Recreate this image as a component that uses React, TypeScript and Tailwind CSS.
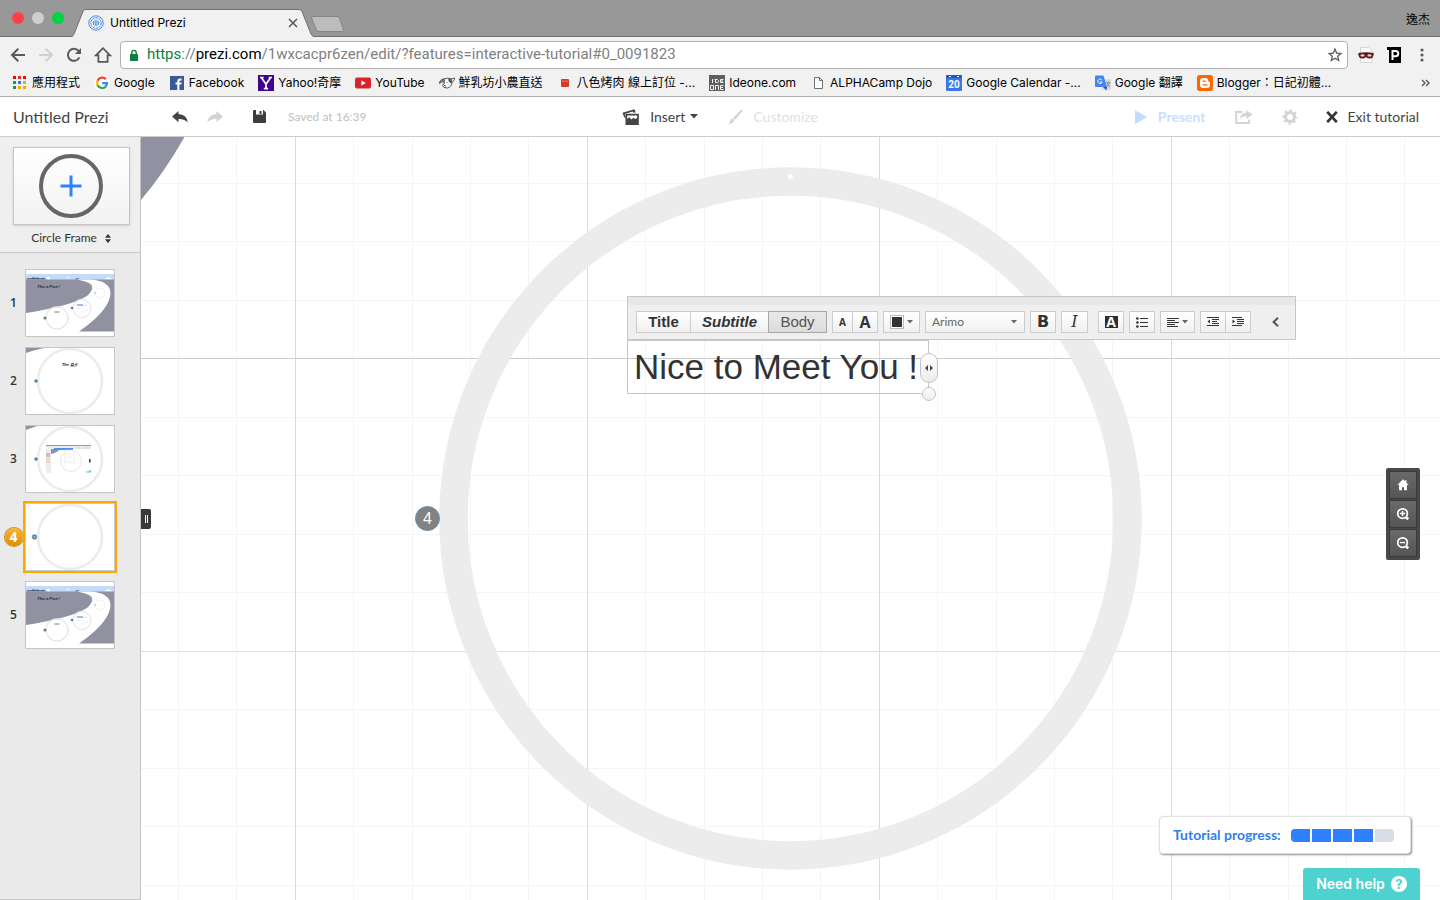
import type { ReactNode } from "react";

const MINOR_X = 58.4;
const MINOR_Y = 58.5;
const slate = "#9092a1";

/* ---------- browser icons ---------- */

function PreziLogo() {
  return (
    <svg viewBox="0 0 16 16" className="size-4 shrink-0" fill="none" stroke="#3d8bf0">
      <circle cx="8" cy="8" r="7.2" strokeWidth="1" />
      <circle cx="8" cy="8" r="5.2" strokeWidth="1" strokeDasharray="2.4 0.6" />
      <path d="M5.5 6.2v3.6M7.2 5v6M8.9 5v6M10.6 6.2v3.6" strokeWidth="1" />
    </svg>
  );
}

function BackIcon({ flip = false, color }: { flip?: boolean; color: string }) {
  return (
    <svg viewBox="0 0 16 16" className={flip ? "size-4 rotate-180" : "size-4"} fill="none" stroke={color} strokeWidth="2">
      <path d="M15 8H2.5M8.3 1.8 2 8l6.3 6.2" />
    </svg>
  );
}

function ReloadIcon() {
  return (
    <svg viewBox="0 0 16 16" className="size-4" fill="none" stroke="#5a5a5a" strokeWidth="2">
      <path d="M13.4 10.4A6 6 0 1 1 12.6 4" />
      <path d="M15 1v6H9z" fill="#5a5a5a" stroke="none" />
    </svg>
  );
}

function HomeOutlineIcon() {
  return (
    <svg viewBox="0 0 18 18" className="size-[18px]" fill="none" stroke="#5a5a5a" strokeWidth="1.8">
      <path d="M9 2.2 2 9.3h2.4v6.5h9.2V9.3H16z" />
    </svg>
  );
}

function LockIcon() {
  return (
    <svg viewBox="0 0 10 13" className="h-[13px] w-[10px] shrink-0">
      <rect x="1" y="5" width="8" height="7" rx="0.6" fill="#0b8043" />
      <path d="M2.8 5.4V3.6a2.2 2.2 0 0 1 4.4 0v1.8" fill="none" stroke="#0b8043" strokeWidth="1.4" />
    </svg>
  );
}

function StarIcon() {
  return (
    <svg viewBox="0 0 16 16" className="size-4" fill="none" stroke="#5a5a5a" strokeWidth="1.3">
      <path d="m8 2.200 1.700 3.900 4.200.4-3.200 2.800 1 4.200L8 11.300l-3.700 2.200 1-4.200-3.200-2.800 4.200-.4z" />
    </svg>
  );
}

function MaskIcon() {
  return (
    <svg viewBox="0 0 16 16" className="size-4">
      <path d="M2.500 .5h8.500l3 3.500v11.500H2.500z" fill="#fafafa" stroke="#cfcfcf" strokeWidth="0.8" />
      <path d="M0.300 6Q8 4.600 15.700 6q.3 5.500-4.100 5.500-2 0-3.600-1.500-1.600 1.500-3.600 1.500Q0 11.500.3 6Z" fill="#5c1a1a" />
      <ellipse cx="4.500" cy="8.400" rx="2" ry="1.200" fill="#e9d5d5" />
      <ellipse cx="11.500" cy="8.400" rx="2" ry="1.200" fill="#e9d5d5" />
    </svg>
  );
}

function PBadgeIcon() {
  return (
    <svg viewBox="0 0 16 16" className="size-4">
      <path d="M1 0h14v16H3V3H1z" fill="#000" />
      <path d="M6.500 13V4h3.200a2.600 2.600 0 0 1 0 5.200H6.500" fill="none" stroke="#fff" strokeWidth="2" />
    </svg>
  );
}

function MenuDots() {
  return (
    <svg viewBox="0 0 4 16" className="h-4 w-1" fill="#5a5a5a">
      <circle cx="2" cy="3" r="1.600" />
      <circle cx="2" cy="8" r="1.600" />
      <circle cx="2" cy="13" r="1.600" />
    </svg>
  );
}

function AppsIcon() {
  const colors = ["#f00", "#f22", "#f00", "#0a9f4a", "#1a7cf0", "#f5a800", "#0a9f4a", "#f5a800", "#f5a800"];
  return (
    <svg viewBox="0 0 16 16" className="size-4 shrink-0">
      {colors.map((c, i) => (
        <rect key={i} x={1 + (i % 3) * 5} y={1 + Math.floor(i / 3) * 5} width="3" height="3" fill={c} />
      ))}
    </svg>
  );
}

function GoogleIcon() {
  return (
    <svg viewBox="0 0 16 16" className="size-4 shrink-0">
      <circle cx="8" cy="8" r="7.800" fill="#fff" />
      <g fill="none" strokeWidth="2.300">
        <path d="M11.900 4.200A5 5 0 0 0 3.600 5.700" stroke="#ea4335" />
        <path d="M3.600 5.700a5 5 0 0 0 0 4.700" stroke="#fbbc05" />
        <path d="M3.600 10.300a5 5 0 0 0 7.800 1.500" stroke="#34a853" />
        <path d="M11.400 11.800A5 5 0 0 0 13 8.100H8.200" stroke="#4285f4" />
      </g>
    </svg>
  );
}

function FacebookIcon() {
  return (
    <svg viewBox="0 0 16 16" className="size-4 shrink-0">
      <rect x="1" y="1" width="14" height="14" fill="#3b5998" />
      <path d="M8.300 15V9.600H6.500V7.500h1.800V6q0-2.600 2.700-2.600h1.600v2h-1.200q-1 0-1 1v1.100h2.200l-.3 2.100h-1.900V15z" fill="#fff" />
    </svg>
  );
}

function YahooIcon() {
  return (
    <svg viewBox="0 0 16 16" className="size-4 shrink-0">
      <rect width="16" height="16" fill="#400090" />
      <path d="M3.300 2.500 8 9.200l4.700-6.700M8 9v4.800M2 2.500h3.600M10.800 2.500H14M5.800 13.600h4.400" fill="none" stroke="#fff" strokeWidth="1.700" />
    </svg>
  );
}

function YouTubeIcon() {
  return (
    <svg viewBox="0 0 16 16" className="size-4 shrink-0">
      <rect x="0" y="2.500" width="16" height="11" rx="2" fill="#d9252a" />
      <path d="m6.400 5.400 4.500 2.600-4.500 2.600z" fill="#fff" />
    </svg>
  );
}

function CowIcon() {
  return (
    <svg viewBox="0 0 16 16" className="size-4 shrink-0" fill="none" stroke="#555" strokeWidth="1">
      <path d="M4.500 4Q9 2.500 12.500 3.800l3.200-.6q-.2 3-2.500 3.500-.7 5.600-4.700 6.300-4.500.2-5.200-2.800 2.700-1 2-3.400Z" fill="#fafafa" />
      <path d="M.5 8.500Q.5 4.500 5 4l.5 2.800Q2 6.500.5 8.500Z" fill="#888" />
      <path d="M9.800 4.300q2-.8 2.700.2l-.3 3.500Q9.500 7 9.800 4.300Z" fill="#555" />
      <path d="M8 7.300l.8 1M4.800 10.500l2.200.5" />
    </svg>
  );
}

function RedBoxIcon() {
  return (
    <svg viewBox="0 0 16 16" className="size-4 shrink-0">
      <rect x="4" y="4" width="8" height="8" rx="1" fill="#d83a27" />
      <path d="M5.500 6.200h5" stroke="#f3b5a8" strokeDasharray="1 1" />
    </svg>
  );
}

function IdeoneIcon() {
  return (
    <svg viewBox="0 0 16 16" className="size-4 shrink-0">
      <rect width="16" height="16" fill="#5f5f5f" />
      <g fill="none" stroke="#f2f2f2" strokeWidth="1">
        <path d="M3.500 4v4M5.500 4.500h3l1 1v1.500l-1 .5h-2V4.500M14.500 4.500h-3v3h3M11.500 6h2.500" />
        <path d="M1.500 10.500h3v4h-3zM6.500 15v-4.500h3V15M14.500 10.500h-3v4h3M11.500 12.500h2.500" />
      </g>
    </svg>
  );
}

function DocIcon() {
  return (
    <svg viewBox="0 0 16 16" className="size-4 shrink-0" fill="#fff" stroke="#707070">
      <path d="M4.500 2.500h5l3 3v8h-8z" />
      <path d="M9.500 2.500v3h3" fill="none" />
    </svg>
  );
}

function CalendarIcon() {
  return (
    <svg viewBox="0 0 16 16" className="size-4 shrink-0">
      <rect width="16" height="16" rx="1.500" fill="#3a78e7" />
      <rect width="16" height="3" rx="1" fill="#2a56c6" />
      <path d="M3 1.500h2M11 1.500h2" stroke="#fff" strokeWidth="1" />
      <text x="8" y="13" textAnchor="middle" fill="#fff" fontSize="10" fontWeight="700" fontFamily="Roboto, sans-serif">20</text>
    </svg>
  );
}

function TranslateIcon() {
  return (
    <svg viewBox="0 0 16 16" className="size-4 shrink-0">
      <rect x="7" y="4" width="9" height="11" rx="1" fill="#dcdcdc" />
      <path d="M0 1.500A1 1 0 0 1 1 .5h7.500L12 12H1a1 1 0 0 1-1-1z" fill="#4285f4" />
      <path d="m8 12 3.500 3.500L12 12z" fill="#2a56c6" />
      <path d="M7 5.200A2.200 2.200 0 1 0 7.200 7H5" fill="none" stroke="#fff" strokeWidth="1" />
      <path d="M11.500 7.500h3.500M13.200 6.500v1M12 8q1 3 3 4M14.500 8q-.5 2.500-3 4" fill="none" stroke="#777" strokeWidth="0.800" />
    </svg>
  );
}

function BloggerIcon() {
  return (
    <svg viewBox="0 0 16 16" className="size-4 shrink-0">
      <rect width="16" height="16" rx="2.500" fill="#f60" />
      <path d="M6 3h2.500A2.700 2.700 0 0 1 11.200 5.700q0 1 .8 1.100 1 .1 1 1V10a3 3 0 0 1-3 3H6a3 3 0 0 1-3-3V6a3 3 0 0 1 3-3z" fill="#fff" />
      <path d="M6 6.200h2.500M6 9.800h4" stroke="#f60" strokeWidth="1.300" strokeLinecap="round" />
    </svg>
  );
}

const bookmarks: { label: string; icon: ReactNode }[] = [
  { label: "應用程式", icon: <AppsIcon /> },
  { label: "Google", icon: <GoogleIcon /> },
  { label: "Facebook", icon: <FacebookIcon /> },
  { label: "Yahoo!奇摩", icon: <YahooIcon /> },
  { label: "YouTube", icon: <YouTubeIcon /> },
  { label: "鮮乳坊小農直送", icon: <CowIcon /> },
  { label: "八色烤肉 線上訂位 -...", icon: <RedBoxIcon /> },
  { label: "Ideone.com", icon: <IdeoneIcon /> },
  { label: "ALPHACamp Dojo", icon: <DocIcon /> },
  { label: "Google Calendar -...", icon: <CalendarIcon /> },
  { label: "Google 翻譯", icon: <TranslateIcon /> },
  { label: "Blogger：日記初體...", icon: <BloggerIcon /> },
];

function BrowserChrome() {
  return (
    <div className="shrink-0 border-b border-[#adadad] bg-[#f1f1f1] font-[Inter,'Noto_Sans_CJK_TC',sans-serif] text-xs text-black">
      <div className="flex h-[37px] items-end border-b border-[#707070] bg-[#989898]">
        <div className="flex h-full w-[72px] shrink-0 items-center gap-2 pl-3">
          <button aria-label="Close window" className="size-3 rounded-full bg-[#fc4146]" />
          <button aria-label="Minimize window" className="size-3 rounded-full bg-[#cfcfcf]" />
          <button aria-label="Zoom window" className="size-3 rounded-full bg-[#00d344]" />
        </div>
        <div className="relative -mb-px flex h-7 w-[242px] items-center gap-[6px] pr-4 pl-4">
          <svg viewBox="0 0 242 28" preserveAspectRatio="none" className="absolute inset-0 size-full">
            <path d="M0 28Q1 27 2 25L11 2.500Q12 .5 14 .5H227Q229 .5 230 2.500L239 25Q240 27 242 28Z" fill="#f1f1f1" />
            <path d="M0 27.500Q1 27 2 25L11 2.500Q12 .5 14 .5H227Q229 .5 230 2.500L239 25Q240 27 242 27.500" fill="none" stroke="#707070" />
          </svg>
          <span className="relative flex"><PreziLogo /></span>
          <span className="relative grow">Untitled Prezi</span>
          <button aria-label="Close tab" className="relative">
            <svg viewBox="0 0 10 10" className="size-[10px]" stroke="#555" strokeWidth="1.500"><path d="m1 1 8 8M9 1 1 9" /></svg>
          </button>
        </div>
        <button aria-label="New tab" className="mb-1 -ml-1">
          <svg viewBox="0 0 34 16" className="h-4 w-[34px]">
            <path d="M3 .5h24q2 0 2.500 1.500l4 12q.5 1.500-1.500 1.500H9q-2 0-2.500-1.500L1.500 2Q1 .5 3 .5Z" fill="#bcbcbc" stroke="#858585" />
          </svg>
        </button>
        <span className="ml-auto flex h-full items-center pt-1 pr-[10px]">逸杰</span>
      </div>

      <div className="flex h-9 items-center pr-4 pl-[10px]">
        <div className="flex w-[110px] shrink-0 items-center gap-3">
          <button aria-label="Back"><BackIcon color="#5a5a5a" /></button>
          <button aria-label="Forward"><BackIcon flip color="#d0d0d0" /></button>
          <button aria-label="Reload"><ReloadIcon /></button>
          <button aria-label="Home"><HomeOutlineIcon /></button>
        </div>
        <div className="flex h-7 min-w-0 grow items-center rounded border border-[#b0b0b0] bg-white px-2 font-[Roboto,sans-serif] text-[15px]">
          <LockIcon />
          <span className="ml-2 grow truncate text-[#808080]">
            <span className="text-[#0b8043]">https</span>://<span className="text-black">prezi.com</span>/1wxcacpr6zen/edit/?features=interactive-tutorial#0_0091823
          </span>
          <button aria-label="Bookmark" className="-mr-1"><StarIcon /></button>
        </div>
        <div className="ml-[10px] flex shrink-0 items-center gap-3">
          <button aria-label="Incognito filter"><MaskIcon /></button>
          <button aria-label="Pocket"><PBadgeIcon /></button>
          <button aria-label="Menu" className="pl-[6px]"><MenuDots /></button>
        </div>
      </div>

      <nav className="flex h-[23px] items-start gap-[14px] pr-[10px] pl-3">
        {bookmarks.map((b) => (
          <a key={b.label} href="#bookmark" className="flex h-5 shrink-0 items-center gap-1 whitespace-nowrap">
            {b.icon}
            <span>{b.label}</span>
          </a>
        ))}
        <button aria-label="More bookmarks" className="ml-auto flex h-5 items-center">
          <svg viewBox="0 0 9 8" className="h-2 w-[9px]" fill="none" stroke="#5a5a5a" strokeWidth="1.400"><path d="m1 1 3 3-3 3M5 1l3 3-3 3" /></svg>
        </button>
      </nav>
    </div>
  );
}

/* ---------- app header ---------- */

function UndoIcon({ flip = false, color }: { flip?: boolean; color: string }) {
  return (
    <svg viewBox="0 0 16 12" className={flip ? "h-3 w-4 -scale-x-100" : "h-3 w-4"} fill={color}>
      <path d="M6.500 0v3.100q8.200.3 9.300 8.500Q12.500 7.700 6.500 8v3.200L0 5.600z" />
    </svg>
  );
}

function AppHeader() {
  return (
    <header className="grid h-10 shrink-0 grid-cols-[1fr_auto_1fr] items-center border-b border-[#ccc] bg-white px-[13px] text-sm text-[#444]">
      <div className="flex items-center">
        <h1 className="w-[159px] text-base">Untitled Prezi</h1>
        <div className="flex items-center gap-[19px]">
          <button aria-label="Undo"><UndoIcon color="#444" /></button>
          <button aria-label="Redo"><UndoIcon flip color="#d4d4d4" /></button>
          <button aria-label="Save" className="ml-[11px]">
            <svg viewBox="0 0 13 13" className="size-[13px]">
              <path d="M0 1Q0 0 1 0h9.500L13 2.500V12q0 1-1 1H1q-1 0-1-1z" fill="#3d3d3d" />
              <path d="M3 0h7v4.500H3z" fill="#fff" />
              <path d="M6.500 1h2v3h-2z" fill="#3d3d3d" />
            </svg>
          </button>
        </div>
        <span className="ml-[22px] text-xs text-[#c0c0c0]">Saved at 16:39</span>
      </div>

      <div className="flex items-center gap-[29px]">
        <button className="flex items-center">
          <svg viewBox="0 0 18 16" className="mr-[10px] h-4 w-[18px]" fill="#444">
            <path d="M.5 3.800 12.500.3l1.200 3.200H11L10.700 2.600 2.600 5 4 8.500l-1 .3-1-.7z" />
            <path d="M3.500 4.700h13.300V16H3.500zM5.200 6.400v3.400l2.200-1.600 2 2.200 2-1.600 1.800 1.300 1.900-1V6.400z" />
          </svg>
          Insert
          <svg viewBox="0 0 8 5" className="ml-[5px] h-[5px] w-2" fill="#444"><path d="M0 0h8L4 4.500z" /></svg>
        </button>
        <button disabled className="flex items-center gap-[10px] text-[#e0e0e0]">
          <svg viewBox="0 0 16 16" className="size-4" fill="#d2d2d2">
            <path d="M15.500.8Q14.500.3 13 1.900L6 9l1.900 2 6.500-7.800q1.600-1.900 1.100-2.400ZM5.300 9.600 7.200 11.500Q6.500 14.500.8 15 3 13.800 3.100 12q.3-2.300 2.200-2.400Z" />
          </svg>
          Customize
        </button>
      </div>

      <div className="flex items-center justify-end pr-2">
        <button disabled className="flex items-center gap-[10px] font-bold text-[#c8dffd]">
          <svg viewBox="0 0 13 14" className="h-[14px] w-[13px]" fill="#c3dcfd"><path d="M0 0v14l12-7z" /></svg>
          Present
        </button>
        <button disabled aria-label="Share" className="ml-[29px]">
          <svg viewBox="0 0 18 14" className="h-[14px] w-[18px]">
            <path d="M7.500 2H1.200v11h13V9.500" fill="none" stroke="#d4d4d4" strokeWidth="2" />
            <path d="M11.500 0 17.500 4.500l-6 4.500V6.300Q7 6 5.200 9.500 5 3.200 11.500 2.700z" fill="#d4d4d4" />
          </svg>
        </button>
        <button disabled aria-label="Settings" className="ml-[29px]">
          <svg viewBox="0 0 16 16" className="size-4">
            <circle cx="8" cy="8" r="4.500" fill="none" stroke="#d4d4d4" strokeWidth="3" />
            <circle cx="8" cy="8" r="6.500" fill="none" stroke="#d4d4d4" strokeWidth="2" strokeDasharray="2.600 2.500" strokeDashoffset="1.300" />
          </svg>
        </button>
        <button className="ml-7 flex items-center gap-[10px]">
          <svg viewBox="0 0 12 12" className="size-3" stroke="#333" strokeWidth="2.600"><path d="m1.200.8 9.600 10.400M10.800.8 1.200 11.200" /></svg>
          Exit tutorial
        </button>
      </div>
    </header>
  );
}

/* ---------- sidebar ---------- */

function OverviewThumb() {
  return (
    <svg viewBox="0 0 88 66" className="block size-full">
      <rect width="88" height="66" fill="#fff" />
      <rect y="4" width="88" height="6" fill="#c3dafb" />
      <path d="M0 9.500q2-2.500 5-1 2-2 4-.5 3-1 5 .5 3-1.500 5 0l3 1zM48 9.500l3-1.500 3 1z" fill="#55617c" />
      <path d="M20 9.500q1-4 3-2.500l2 2.500zM40 8l2-1.500 2 1.500zM79 9.500q1-3 4-2l4 2z" fill="#fff" />
      <path d="M0 9.500h50Q62 11 65.500 15 68 20 61 26 45 36 0 43Z" fill={slate} />
      <path d="M65 9.500h23v52H53Q84 40 84.500 23 84 11 65 9.500Z" fill={slate} />
      <g fill="#fff" stroke="#e8e8e8" strokeWidth="1.300">
        <circle cx="31" cy="48" r="11" />
        <circle cx="56" cy="38.500" r="9" />
        <circle cx="74" cy="23" r="5" strokeWidth=".7" />
      </g>
      <circle cx="19" cy="48" r="1.600" fill="#5c8299" />
      <circle cx="46" cy="38" r="1.300" fill="#5c8299" />
      <circle cx="69" cy="23" r=".7" fill="#7da5bb" />
      <path d="M28.500 42h5" stroke="#777" />
      <path d="M51 35h6" stroke="#5c94e6" strokeWidth="1.200" />
      <path d="M57 35.500h4M51 38h3M58 40h3M55 42h3" stroke="#ddd" strokeWidth=".7" />
      <text x="11.500" y="18" fontSize="3.500" fontStyle="italic" fontWeight="700" fontFamily="Liberation Sans, sans-serif" fill="#222">This is Prezi !</text>
    </svg>
  );
}

function FrameThumb({ variant }: { variant: "title" | "screen" | "blank" }) {
  return (
    <svg viewBox="0 0 88 66" className="block size-full">
      <rect width="88" height="66" fill="#fff" />
      {variant === "title" && <path d="M0 0h18Q7 2.500 0 5z" fill={slate} />}
      {variant === "screen" && <path d="M0 0h11L0 4z" fill={slate} />}
      <circle cx="44" cy="33" r="32" fill="none" stroke="#ececec" strokeWidth="2.600" />
      <circle cx={variant === "blank" ? 8.500 : 10} cy="33" r={variant === "blank" ? 2.400 : 1.500} fill="#6c8191" stroke="#5594b5" strokeWidth=".6" />
      {variant === "blank" && <circle cx="8.500" cy="33" r=".8" fill="#d5d5d5" />}
      {variant === "title" && (
        <text x="44" y="17.500" textAnchor="middle" fontSize="4" fontStyle="italic" fontWeight="700" fontFamily="Liberation Sans, sans-serif" fill="#222">The 自介</text>
      )}
      {variant === "screen" && (
        <g>
          <rect x="20" y="19" width="45" height="1" fill="#999" />
          <rect x="20" y="20" width="45" height="3" fill="#ececec" />
          <rect x="20" y="22" width="5" height="25" fill="#ececec" />
          <path d="M25 23h9q-3 4-9 5z" fill={slate} />
          <rect x="28" y="22" width="19" height="2" fill="#4a90f5" />
          <path d="M50 22h5M58 22h5" stroke="#bbb" strokeWidth=".6" />
          <circle cx="45" cy="35" r="10.500" fill="none" stroke="#e4e4e4" strokeWidth=".9" />
          <rect x="39" y="24" width="9" height="12" fill="#fff" stroke="#ddd" strokeWidth=".5" />
          <path d="M41 28h4M41 31h5" stroke="#ccc" strokeWidth=".5" />
          <path d="M25 37h38M39 24v22" stroke="#eee" strokeWidth=".5" />
          <path d="M20 28h4M20 30h4" stroke="#777" strokeWidth=".7" />
          <path d="M20 33h4M20 36h4" stroke="#f3a73a" strokeWidth=".7" />
          <rect x="63" y="33" width="1.500" height="3.500" fill="#333" />
          <path d="M60 46.500v-1h2l3-1.500v2.500z" fill="#4dd2d0" />
        </g>
      )}
    </svg>
  );
}

const steps: { n: number; thumb: ReactNode; active?: boolean }[] = [
  { n: 1, thumb: <OverviewThumb /> },
  { n: 2, thumb: <FrameThumb variant="title" /> },
  { n: 3, thumb: <FrameThumb variant="screen" /> },
  { n: 4, thumb: <FrameThumb variant="blank" />, active: true },
  { n: 5, thumb: <OverviewThumb /> },
];

function Sidebar() {
  return (
    <aside className="flex w-[141px] shrink-0 flex-col border-r border-b border-[#c4c4c4] bg-[#eaeaea] text-[#333]">
      <div className="flex h-[116px] flex-col items-center border-b border-[#c8c8c8] bg-[#efefef] pt-[10px] pl-[2px]">
        <button aria-label="Add circle frame" className="flex h-[78px] w-[117px] items-center justify-center border border-[#c6c6c6] bg-linear-to-b from-white to-[#f2f2f2] shadow-sm">
          <svg viewBox="0 0 64 64" className="size-16" fill="none">
            <circle cx="32" cy="32" r="30" stroke="#666" strokeWidth="4" />
            <path d="M32 21.500v21M21.500 32h21" stroke="#2f83fb" strokeWidth="3" />
          </svg>
        </button>
        <button className="mt-[5px] flex items-center gap-2 text-xs leading-4">
          Circle Frame
          <svg viewBox="0 0 6 9" className="h-[9px] w-[6px]" fill="#333"><path d="M0 3.700 3 0l3 3.700zM0 5.300h6L3 9z" /></svg>
        </button>
      </div>
      <ol className="flex flex-col gap-[10px] pt-4">
        {steps.map((s) => (
          <li key={s.n}>
            <button className="flex h-[68px] items-center">
              <span className="flex w-[25px] items-center justify-center pl-[2px] font-['Open_Sans',sans-serif] text-xs font-semibold">
                {s.active ? (
                  <span className="flex size-[18px] items-center justify-center rounded-full bg-linear-to-b from-[#fdb42a] to-[#e08b00] text-sm font-bold text-white ring-1 ring-[#c98920]">{s.n}</span>
                ) : (
                  s.n
                )}
              </span>
              <span className={s.active ? "h-[68px] w-[90px] border border-[#ccc] outline-2 outline-[#fda800]" : "h-[68px] w-[90px] border border-[#c6c6c6]"}>
                {s.thumb}
              </span>
            </button>
          </li>
        ))}
      </ol>
    </aside>
  );
}

/* ---------- canvas ---------- */

function CanvasBackdrop() {
  const cols = Array.from({ length: 44 }, (_, i) => i - 2);
  const rows = Array.from({ length: 28 }, (_, i) => i - 3);
  return (
    <svg className="absolute inset-0 size-full">
      {cols.filter((k) => k % 5 !== 0).map((k) => (
        <rect key={k} x={Math.floor(154.2 + k * MINOR_X)} y="0" width="1" height="100%" fill="#f5f5f5" />
      ))}
      {rows.filter((k) => k % 5 !== 0).map((k) => (
        <rect key={k} x="0" y={Math.floor(221.6 + k * MINOR_Y)} width="100%" height="1" fill="#f5f5f5" />
      ))}
      {cols.filter((k) => k % 5 === 0).map((k) => (
        <rect key={k} x={Math.floor(154.2 + k * MINOR_X)} y="0" width="1" height="100%" fill="#dadada" />
      ))}
      {rows.filter((k) => k % 5 === 0).map((k) => (
        <rect key={k} x="0" y={Math.floor(221.6 + k * MINOR_Y)} width="100%" height="1" fill={k === 0 ? "#cccccc" : "#e0e0e0"} />
      ))}
      <path d="M0 0h43.500Q23 36 0 63Z" fill={slate} />
      <circle cx="649.5" cy="381.5" r="337" fill="none" stroke="#ebebeb" strokeWidth="28.5" strokeOpacity="0.93" />
      <circle cx="649.5" cy="39.5" r="2.5" fill="#fff" />
    </svg>
  );
}

const toolButton = "flex h-[22px] items-center justify-center border border-[#ccc] bg-linear-to-b from-white to-[#f0f0f0]";

function Caret() {
  return <svg viewBox="0 0 6 4" className="h-1 w-[6px] shrink-0" fill="#666"><path d="M0 0h6L3 3.500z" /></svg>;
}

function IndentIcon({ right = false }: { right?: boolean }) {
  return (
    <svg viewBox="0 0 12 10" className="h-[10px] w-3" stroke="#333" strokeWidth="1">
      <path d={right ? "M0 .5h10M5 2.500h7M5 4.500h7M5 6.500h7M0 8.500h10" : "M0 .5h12M5 2.500h7M5 4.500h5M5 6.500h7M0 8.500h12"} />
      <path d={right ? "M.5 2.500 3 4.500.5 6.500z" : "M3 2.500.5 4.500 3 6.500z"} fill="#333" stroke="none" />
    </svg>
  );
}

function TextToolbar() {
  return (
    <div className="w-[669px] border border-[#c6c6c6] bg-[#efefef] text-[#333]">
      <div className="h-2 bg-[#e7e7e7]" />
      <div className="flex h-[34px] items-center gap-[5px] pl-2">
        <div className="flex font-['Liberation_Sans',Arial,sans-serif] text-[15px] leading-6">
          <button className={`${toolButton} w-[54px] border-r-0 font-bold`}>Title</button>
          <button className={`${toolButton} w-[78px] border-r-0 font-bold italic`}>Subtitle</button>
          <button className="flex h-[22px] w-[59px] items-center justify-center border border-[#a8a8a8] bg-linear-to-b from-[#e8e8e8] to-[#dcdcdc] text-[#555]">Body</button>
        </div>
        <div className="flex font-['Open_Sans',sans-serif] font-bold">
          <button aria-label="Smaller text" className={`${toolButton} w-5 border-r-0 text-[10px]`}>A</button>
          <button aria-label="Larger text" className={`${toolButton} w-[26px] text-base`}>A</button>
        </div>
        <button aria-label="Text colour" className={`${toolButton} w-[37px] gap-[3px]`}>
          <span className="size-[14px] border border-[#bbb] bg-white p-px"><span className="block size-full bg-[#333]" /></span>
          <Caret />
        </button>
        <label className={`${toolButton} w-[100px] pr-[7px] pl-[6px]`}>
          <select aria-label="Font" className="grow appearance-none bg-transparent text-xs text-[#666]"><option>Arimo</option></select>
          <Caret />
        </label>
        <button aria-label="Bold" className={`${toolButton} w-[26px] font-['DejaVu_Sans',sans-serif] text-base font-bold`}>B</button>
        <button aria-label="Italic" className={`${toolButton} w-[27px] font-['DejaVu_Serif',serif] text-base italic`}>I</button>
        <button aria-label="Highlight" className={`${toolButton} ml-[5px] w-[26px]`}>
          <span className="flex h-3 w-[13px] items-center justify-center bg-[#2e2e2e] font-['Open_Sans',sans-serif] text-sm font-bold text-white">A</span>
        </button>
        <button aria-label="Bullet list" className={`${toolButton} w-[26px]`}>
          <svg viewBox="0 0 12 11" className="h-[11px] w-3" fill="#333">
            <circle cx="1.400" cy="1.500" r="1.300" /><circle cx="1.400" cy="5.500" r="1.300" /><circle cx="1.400" cy="9.500" r="1.300" />
            <path d="M4 1h8v1H4zM4 5h8v1H4zM4 9h8v1H4z" />
          </svg>
        </button>
        <button aria-label="Align" className={`${toolButton} w-[35px] gap-[3px]`}>
          <svg viewBox="0 0 12 9" className="h-[9px] w-3" fill="#333"><path d="M0 0h12v1H0zM0 2h8v1H0zM0 4h12v1H0zM0 6h8v1H0zM0 8h11v1H0z" /></svg>
          <Caret />
        </button>
        <div className="flex">
          <button aria-label="Outdent" className={`${toolButton} w-[25px] border-r-0`}><IndentIcon /></button>
          <button aria-label="Indent" className={`${toolButton} w-[26px]`}><IndentIcon right /></button>
        </div>
        <button aria-label="Collapse toolbar" className="ml-4">
          <svg viewBox="0 0 7 10" className="h-[10px] w-[7px]" fill="none" stroke="#555" strokeWidth="2"><path d="M6 .8 1.600 5 6 9.200" /></svg>
        </button>
      </div>
    </div>
  );
}

function ZoomControls() {
  const icons: { label: string; icon: ReactNode }[] = [
    { label: "Home view", icon: <path d="M8 1.500 1.500 8H3.500v6h3.300v-3.500h2.400V14h3.300V8h2L12 5.500V2.500h-1.700v1.300z" fill="#fff" /> },
    { label: "Zoom in", icon: <g fill="none" stroke="#fff" strokeWidth="2"><circle cx="7.500" cy="7.500" r="5.500" /><path d="m11 11.500 3 2.500" strokeWidth="3" /><path d="M4.500 7.500h6M7.500 4.500v6" strokeWidth="1.600" /></g> },
    { label: "Zoom out", icon: <g fill="none" stroke="#fff" strokeWidth="2"><circle cx="7.500" cy="7.500" r="5.500" /><path d="m11 11.500 3 2.500" strokeWidth="3" /><path d="M4.500 7.500h6" strokeWidth="1.600" /></g> },
  ];
  return (
    <div className="absolute top-[331px] right-5 flex w-[34px] flex-col gap-px rounded-xs bg-[#484848] p-[3px]">
      {icons.map((i) => (
        <button key={i.label} aria-label={i.label} className="flex h-7 items-center justify-center border border-[#3a3a3a] bg-linear-to-b from-[#6a6a6a] to-[#555]">
          <svg viewBox="0 0 16 16" className="size-[14px]">{i.icon}</svg>
        </button>
      ))}
    </div>
  );
}

function Canvas() {
  return (
    <main className="relative min-w-0 grow overflow-hidden bg-white">
      <CanvasBackdrop />

      <button aria-label="Toggle sidebar" className="absolute top-[372px] left-0 flex h-5 w-[10px] items-center justify-center gap-px rounded-r-xs bg-[#3a3a3a]">
        <span className="h-2 w-px bg-white" />
        <span className="h-2 w-px bg-white" />
      </button>

      <span className="absolute top-[369px] left-[274px] flex size-[25px] items-center justify-center rounded-full border border-[#5e93ab] bg-[#828282] font-['Liberation_Sans',Arial,sans-serif] text-base text-white">4</span>

      <div className="absolute top-[159px] left-[486px]">
        <TextToolbar />
        <div className="relative h-[54px] w-[302px] border border-[#c6c6c6]">
          <input aria-label="Slide text" defaultValue="Nice to Meet You !" className="h-full w-full bg-transparent pl-[6px] font-['Liberation_Sans',Arial,sans-serif] text-[35px] text-[#333] outline-none" />
          <button aria-label="Resize width" className="absolute top-3 -right-[10px] flex h-[30px] w-[18px] items-center justify-center rounded-full border border-[#c4c4c4] bg-linear-to-b from-white to-[#ececec]">
            <svg viewBox="0 0 8 6" className="h-[6px] w-2" fill="#444"><path d="M3 0v6L0 3zM5 0v6l3-3z" /></svg>
          </button>
          <button aria-label="Scale text" className="absolute -right-2 -bottom-2 size-[14px] rounded-full border border-[#c4c4c4] bg-linear-to-b from-white to-[#ececec]" />
        </div>
      </div>

      <ZoomControls />

      <div className="absolute right-[29px] bottom-[46px] flex h-[38px] w-[252px] items-center justify-between rounded border border-[#e0e0e0] bg-white pr-4 pl-[13px] text-sm font-bold text-[#2f80ed] shadow-[1px_1px_2px_rgba(0,0,0,0.45)]">
        Tutorial progress:
        <span className="flex h-[13px] gap-[2px] overflow-hidden rounded-[4px]">
          {[0, 1, 2, 3, 4].map((i) => (
            <span key={i} className={i < 4 ? "w-[19px] bg-[#2f80ff]" : "w-[19px] bg-[#d9dde6]"} />
          ))}
        </span>
      </div>

      <button className="absolute right-5 bottom-0 flex h-8 w-[117px] items-center justify-center gap-[6px] rounded-t-[3px] bg-[#4dd2d0] font-[Inter,sans-serif] text-sm font-semibold text-white">
        Need help
        <span className="flex size-4 items-center justify-center rounded-full bg-white text-[13px] font-bold text-[#4dd2d0]">?</span>
      </button>
    </main>
  );
}

export default function App() {
  return (
    <div className="flex h-screen flex-col overflow-hidden bg-white font-[Lato,sans-serif]">
      <BrowserChrome />
      <AppHeader />
      <div className="flex min-h-0 grow">
        <Sidebar />
        <Canvas />
      </div>
    </div>
  );
}
